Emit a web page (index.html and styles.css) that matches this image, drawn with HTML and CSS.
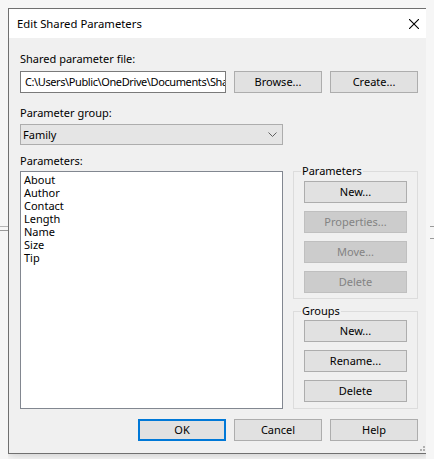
FILE: index.html
```html
<!DOCTYPE html>
<html lang="en">
<head>
<meta charset="utf-8">
<title>Edit Shared Parameters</title>
<link rel="stylesheet" href="styles.css">
</head>
<body>
<div class="under under-l1"></div>
<div class="under under-l2"></div>
<div class="under under-r1"></div>
<div class="under under-r2"></div>
<div class="dialog">
  <div class="titlebar">
    <span class="title">Edit Shared Parameters</span>
    <svg class="close" width="10" height="10" viewBox="0 0 10 10"><path d="M0 0L10 10M10 0L0 10" stroke="#000" stroke-width="1.1" fill="none"/></svg>
  </div>
  <div class="content">
    <div class="lbl lbl-file">Shared parameter file:</div>
    <div class="row-file">
      <div class="input">C:\Users\Public\OneDrive\Documents\SharedParameters.txt</div>
      <button class="btn">Browse...</button>
      <button class="btn">Create...</button>
    </div>
    <div class="lbl lbl-group">Parameter group:</div>
    <div class="select"><span>Family</span><svg width="9" height="5" viewBox="0 0 9 5"><polyline points="0.5,0.5 4.5,4.5 8.5,0.5" stroke="#606060" stroke-width="1" fill="none"/></svg></div>
    <div class="lbl lbl-params">Parameters:</div>
    <div class="main">
      <div class="list">
        <div class="item">About</div>
        <div class="item">Author</div>
        <div class="item">Contact</div>
        <div class="item">Length</div>
        <div class="item">Name</div>
        <div class="item">Size</div>
        <div class="item">Tip</div>
      </div>
      <div class="side">
        <div class="group group-params">
          <div class="legend">Parameters</div>
          <button class="btn">New...</button>
          <button class="btn disabled">Properties...</button>
          <button class="btn disabled">Move...</button>
          <button class="btn disabled">Delete</button>
        </div>
        <div class="group group-groups">
          <div class="legend">Groups</div>
          <button class="btn">New...</button>
          <button class="btn">Rename...</button>
          <button class="btn">Delete</button>
        </div>
      </div>
    </div>
    <div class="footer">
      <button class="btn default">OK</button>
      <button class="btn">Cancel</button>
      <button class="btn">Help</button>
    </div>
  </div>
  <svg class="grip" width="8" height="8" viewBox="0 0 8 8">
    <rect x="6" y="0" width="2" height="2" fill="#b0b0b0"/>
    <rect x="3" y="3" width="2" height="2" fill="#b0b0b0"/>
    <rect x="6" y="3" width="2" height="2" fill="#b0b0b0"/>
    <rect x="0" y="6" width="2" height="2" fill="#b0b0b0"/>
    <rect x="3" y="6" width="2" height="2" fill="#b0b0b0"/>
    <rect x="6" y="6" width="2" height="2" fill="#b0b0b0"/>
  </svg>
</div>
</body>
</html>
```

FILE: styles.css
```css
* { box-sizing: border-box; }

html, body { height: 100%; }

body {
  margin: 8px;
  background: #f6f6f6;
  font-family: "Noto Sans", "Open Sans", sans-serif;
  font-size: 11px;
  color: #000;
}

.under {
  position: absolute;
  height: 1px;
  background: #9a9a9a;
}
.under-l1 { left: 0; top: 226px; width: 8px; background: #b4b4b4; }
.under-l2 { left: 0; top: 230px; width: 8px; }
.under-r1 { right: 0; top: 226px; width: 4px; }
.under-r2 { right: 0; top: 238px; width: 4px; }

.dialog {
  position: relative;
  width: 422px;
  height: 446px;
  border: 1px solid #707070;
  background: #f0f0f0;
  box-shadow: 0 0 10px rgba(0, 0, 0, 0.22);
  display: flex;
  flex-direction: column;
}

.titlebar {
  height: 29px;
  flex: none;
  background: #fff;
  display: flex;
  align-items: center;
  justify-content: space-between;
  padding: 0 10px 0 8px;
}

.title { font-size: 11.3px; }

.content {
  display: flex;
  flex-direction: column;
  padding: 13px 11px 12px;
}

.lbl { line-height: 16px; }
.lbl-file { margin-bottom: 4px; }
.lbl-group { margin: 12px 0 3px; }
.lbl-params { margin: 8px 0 2px; }

.row-file {
  display: flex;
  gap: 8px;
  height: 22px;
}

.input {
  width: 206px;
  border: 1px solid #7a7a7a;
  background: #fff;
  padding: 0 4px;
  line-height: 20px;
  white-space: nowrap;
  overflow: hidden;
  letter-spacing: -0.4px;
}

.btn {
  font: inherit;
  color: #000;
  width: 88px;
  height: 22px;
  padding: 0;
  background: #e1e1e1;
  border: 1px solid #adadad;
  border-radius: 0;
  line-height: 18px;
}

.btn.disabled {
  background: #cccccc;
  border-color: #bfbfbf;
  color: #838383;
}

.btn.default { border: 2px solid #0078d7; }

.select {
  width: 263px;
  height: 21px;
  border: 1px solid #adadad;
  background: #e5e5e5;
  display: flex;
  align-items: center;
  justify-content: space-between;
  padding: 0 5px 0 2px;
}

.main {
  display: flex;
  gap: 10px;
  height: 238px;
}

.list {
  width: 263px;
  border: 1px solid #828790;
  background: #fff;
  padding: 1px 3px;
  line-height: 13px;
}

.item { height: 13px; }

.side {
  width: 125px;
  display: flex;
  flex-direction: column;
  gap: 12px;
}

.group {
  border: 1px solid #dcdcdc;
  display: flex;
  flex-direction: column;
  gap: 8px;
  padding: 0 10px 5px;
}
.group-groups { padding-bottom: 6px; }

.group .btn { width: 100%; }

.legend {
  align-self: flex-start;
  margin: -8px 0 -5px -3px;
  padding: 0 1px;
  line-height: 14px;
  background: #f0f0f0;
}
.group-groups .legend { margin-bottom: -6px; }

.footer {
  margin-top: 10px;
  display: flex;
  justify-content: flex-end;
  gap: 8px;
}

.grip {
  position: absolute;
  right: 1px;
  bottom: 2px;
}
```
